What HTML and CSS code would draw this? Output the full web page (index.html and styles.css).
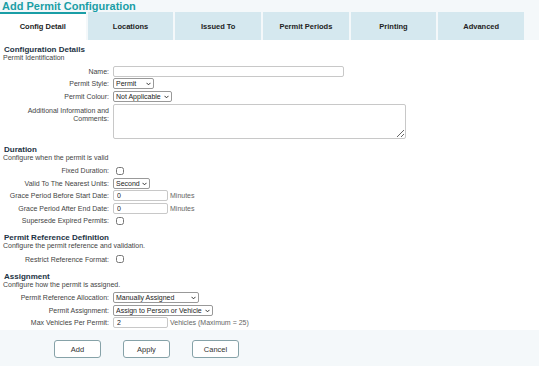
FILE: index.html
```html
<!DOCTYPE html>
<html lang="en">
<head>
    <meta charset="UTF-8">
    <title>Add Permit Configuration</title>
    <link rel="stylesheet" href="styles.css">
</head>
<body>
    <h1 class="page-title">Add Permit Configuration</h1>

    <ul class="tabs">
        <li class="tab active">Config Detail</li>
        <li class="tab">Locations</li>
        <li class="tab">Issued To</li>
        <li class="tab">Permit Periods</li>
        <li class="tab">Printing</li>
        <li class="tab">Advanced</li>
    </ul>

    <div class="panel">
        <section class="group">
            <h2>Configuration Details</h2>
            <p class="hint">Permit Identification</p>
            <div class="row">
                <label>Name:</label>
                <input type="text" class="field wide">
            </div>
            <div class="row">
                <label>Permit Style:</label>
                <span class="dropdown w-style">
                    <select class="field"><option>Permit</option></select>
                    <svg viewBox="0 0 6 4"><path d="M0.6 0.6 L3 3 L5.4 0.6" /></svg>
                </span>
            </div>
            <div class="row">
                <label>Permit Colour:</label>
                <span class="dropdown w-colour">
                    <select class="field"><option>Not Applicable</option></select>
                    <svg viewBox="0 0 6 4"><path d="M0.6 0.6 L3 3 L5.4 0.6" /></svg>
                </span>
            </div>
            <div class="row top">
                <label>Additional Information and Comments:</label>
                <textarea class="field notes"></textarea>
            </div>
        </section>

        <section class="group">
            <h2>Duration</h2>
            <p class="hint">Configure when the permit is valid</p>
            <div class="row">
                <label>Fixed Duration:</label>
                <input type="checkbox" class="check">
            </div>
            <div class="row">
                <label>Valid To The Nearest Units:</label>
                <span class="dropdown w-units">
                    <select class="field"><option>Second</option></select>
                    <svg viewBox="0 0 6 4"><path d="M0.6 0.6 L3 3 L5.4 0.6" /></svg>
                </span>
            </div>
            <div class="row">
                <label>Grace Period Before Start Date:</label>
                <input type="text" class="field short" value="0"><span class="unit">Minutes</span>
            </div>
            <div class="row">
                <label>Grace Period After End Date:</label>
                <input type="text" class="field short" value="0"><span class="unit">Minutes</span>
            </div>
            <div class="row">
                <label>Supersede Expired Permits:</label>
                <input type="checkbox" class="check">
            </div>
        </section>

        <section class="group">
            <h2>Permit Reference Definition</h2>
            <p class="hint">Configure the permit reference and validation.</p>
            <div class="row">
                <label>Restrict Reference Format:</label>
                <input type="checkbox" class="check">
            </div>
        </section>

        <section class="group">
            <h2>Assignment</h2>
            <p class="hint">Configure how the permit is assigned.</p>
            <div class="row">
                <label>Permit Reference Allocation:</label>
                <span class="dropdown w-alloc">
                    <select class="field"><option>Manually Assigned</option></select>
                    <svg viewBox="0 0 6 4"><path d="M0.6 0.6 L3 3 L5.4 0.6" /></svg>
                </span>
            </div>
            <div class="row">
                <label>Permit Assignment:</label>
                <span class="dropdown w-assign">
                    <select class="field"><option>Assign to Person or Vehicle</option></select>
                    <svg viewBox="0 0 6 4"><path d="M0.6 0.6 L3 3 L5.4 0.6" /></svg>
                </span>
            </div>
            <div class="row">
                <label>Max Vehicles Per Permit:</label>
                <input type="text" class="field short" value="2"><span class="unit">Vehicles (Maximum = 25)</span>
            </div>
        </section>
    </div>

    <div class="actions">
        <button class="btn">Add</button>
        <button class="btn">Apply</button>
        <button class="btn">Cancel</button>
    </div>
</body>
</html>
```

FILE: styles.css
```css
* {
    margin: 0;
    padding: 0;
    box-sizing: border-box;
}
body {
    font-family: 'Liberation Sans', Arial, sans-serif;
    color: #444;
    background-color: #f4f8fa;
    width: 539px;
}
.page-title {
    font-size: 11px;
    line-height: 12px;
    color: #1a9ea6;
    padding-left: 2px;
}

/* tab strip */
.tabs {
    list-style: none;
    display: flex;
    gap: 2px;
    height: 28px;
    padding-right: 15px;
}
.tab {
    flex: 1;
    background-color: #d5e8ef;
    font-size: 7.5px;
    font-weight: bold;
    color: #222;
    display: flex;
    align-items: center;
    justify-content: center;
    border-top: 2px solid transparent;
    padding-bottom: 2px;
}
.tab.active {
    background-color: #fff;
    border-top-color: #1a9ea6;
}

/* form body */
.panel {
    background-color: #fff;
    padding: 5px 4px 3px;
    height: 290px;
}
.group {
    margin-bottom: 6px;
}
.group h2 {
    font-size: 8px;
    line-height: 9px;
    color: #1d3344;
}
.hint {
    font-size: 7px;
    line-height: 8px;
    color: #444;
    margin-bottom: 3px;
    margin-left: -1px;
}
.row {
    display: flex;
    align-items: center;
    min-height: 12.5px;
    font-size: 7px;
}
.row.top {
    align-items: flex-start;
    margin-top: 1px;
}
.row label {
    width: 109px;
    text-align: right;
    padding-right: 4px;
    color: #444;
}
.row.top label {
    padding-left: 20px;
    padding-top: 3px;
    line-height: 8px;
}
.field {
    font-family: inherit;
    font-size: 7px;
    height: 11px;
    border: 1px solid #999;
    border-radius: 2px;
    background-color: #fff;
    color: #222;
}
input.field {
    border-color: #c8c8c8;
    padding: 0 3px;
}
.wide {
    width: 231px;
}
.short {
    width: 55px;
}
.notes {
    width: 293px;
    height: 35px;
    border-color: #c8c8c8;
}
.check {
    width: 8px;
    height: 8px;
    margin-left: 3px;
}
.unit {
    padding-left: 2px;
    color: #666;
}

/* select with chevron */
.dropdown {
    position: relative;
    display: inline-block;
    height: 11px;
}
.dropdown select {
    appearance: none;
    -webkit-appearance: none;
    width: 100%;
    padding: 0 8px 0 2px;
    line-height: 9px;
}
.dropdown svg {
    position: absolute;
    right: 3px;
    top: 4px;
    width: 5px;
    height: 4px;
    fill: none;
    stroke: #222;
    stroke-width: 1.1;
}
.w-style { width: 41px; }
.w-colour { width: 59px; }
.w-units { width: 37px; }
.w-alloc { width: 86px; }
.w-assign { width: 100px; }

/* buttons */
.actions {
    display: flex;
    gap: 22px;
    padding: 10px 0 0 54px;
}
.btn {
    width: 47px;
    height: 18px;
    background-color: #fff;
    border: 1px solid #86a2a8;
    border-radius: 3px;
    font-family: inherit;
    font-size: 7.5px;
    color: #333;
}
```
